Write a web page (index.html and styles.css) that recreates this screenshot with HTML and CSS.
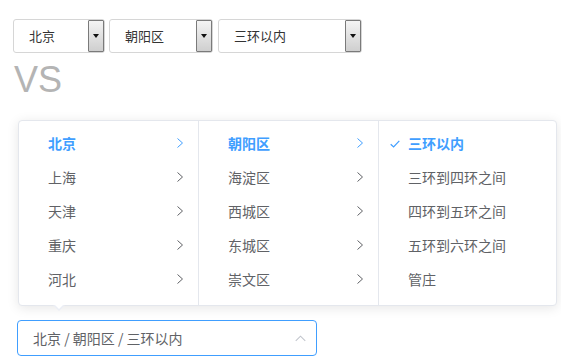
FILE: index.html
```html
<!DOCTYPE html>
<html lang="zh">
<head>
<meta charset="utf-8">
<title>Cascader</title>
<link rel="stylesheet" href="styles.css">
</head>
<body>
<div class="page">
  <div class="selects">
    <div class="sel w1"><span class="sel-text">北京</span><span class="sel-btn"><i class="tri"></i></span></div>
    <div class="sel w2"><span class="sel-text">朝阳区</span><span class="sel-btn"><i class="tri"></i></span></div>
    <div class="sel w3"><span class="sel-text">三环以内</span><span class="sel-btn"><i class="tri"></i></span></div>
  </div>
  <div class="vs">VS</div>
  <div class="cascader">
    <div class="panel">
      <ul class="menu">
        <li class="node active"><span>北京</span><svg class="arr" viewBox="0 0 6 10"><path d="M0.5 0.5 L5.5 5 L0.5 9.5" /></svg></li>
        <li class="node"><span>上海</span><svg class="arr" viewBox="0 0 6 10"><path d="M0.5 0.5 L5.5 5 L0.5 9.5" /></svg></li>
        <li class="node"><span>天津</span><svg class="arr" viewBox="0 0 6 10"><path d="M0.5 0.5 L5.5 5 L0.5 9.5" /></svg></li>
        <li class="node"><span>重庆</span><svg class="arr" viewBox="0 0 6 10"><path d="M0.5 0.5 L5.5 5 L0.5 9.5" /></svg></li>
        <li class="node"><span>河北</span><svg class="arr" viewBox="0 0 6 10"><path d="M0.5 0.5 L5.5 5 L0.5 9.5" /></svg></li>
      </ul>
      <ul class="menu">
        <li class="node active"><span>朝阳区</span><svg class="arr" viewBox="0 0 6 10"><path d="M0.5 0.5 L5.5 5 L0.5 9.5" /></svg></li>
        <li class="node"><span>海淀区</span><svg class="arr" viewBox="0 0 6 10"><path d="M0.5 0.5 L5.5 5 L0.5 9.5" /></svg></li>
        <li class="node"><span>西城区</span><svg class="arr" viewBox="0 0 6 10"><path d="M0.5 0.5 L5.5 5 L0.5 9.5" /></svg></li>
        <li class="node"><span>东城区</span><svg class="arr" viewBox="0 0 6 10"><path d="M0.5 0.5 L5.5 5 L0.5 9.5" /></svg></li>
        <li class="node"><span>崇文区</span><svg class="arr" viewBox="0 0 6 10"><path d="M0.5 0.5 L5.5 5 L0.5 9.5" /></svg></li>
      </ul>
      <ul class="menu last">
        <li class="node leaf active"><svg class="check" viewBox="0 0 10 8"><path d="M0.7 4.2 L3.6 7 L9.3 0.8" /></svg><span>三环以内</span></li>
        <li class="node leaf"><span>三环到四环之间</span></li>
        <li class="node leaf"><span>四环到五环之间</span></li>
        <li class="node leaf"><span>五环到六环之间</span></li>
        <li class="node leaf"><span>管庄</span></li>
      </ul>
      <i class="popper-arrow"></i>
    </div>
    <div class="input">
      <span class="input-text">北京 / 朝阳区 / 三环以内</span>
      <svg class="up" viewBox="0 0 12 7"><path d="M0.8 6.2 L6 1 L11.2 6.2" /></svg>
    </div>
  </div>
</div>
</body>
</html>
```

FILE: styles.css
```css
* { box-sizing: border-box; }
html, body { margin: 0; padding: 0; background: #fff; }
body {
  font-family: "Noto Sans CJK SC", "Liberation Sans", sans-serif;
  color: #606266;
}
.page { padding: 19px 0 0 13px; }

.selects { display: flex; gap: 4px; height: 34px; }
.sel {
  display: flex;
  align-items: stretch;
  height: 34px;
  border: 1px solid #d6d6d6;
  border-radius: 3px;
  background: #fff;
}
.w1 { width: 92px; }
.w2 { width: 104px; }
.w3 { width: 144px; margin-left: 1px; }
.sel-text {
  flex: 1;
  padding-left: 15px;
  font-size: 13px;
  line-height: 32px;
  color: #333;
}
.sel-btn {
  width: 16px;
  border: 1px solid #7a7a7a;
  border-radius: 1px;
  background: linear-gradient(#f4f4f4, #cfcfcf);
  display: flex;
  align-items: center;
  justify-content: center;
}
.tri {
  width: 0; height: 0;
  border-left: 3.5px solid transparent;
  border-right: 3.5px solid transparent;
  border-top: 4px solid #111;
}

.vs {
  margin-top: 7px;
  font-family: "Liberation Sans", Arial, sans-serif;
  font-size: 36px;
  line-height: 40px;
  color: #b4b4b4;
  padding-left: 1px;
}

.cascader {
  position: relative;
  width: 300px;
  margin: 220px 0 0 4px;
}
.input {
  height: 36px;
  border: 1px solid #409eff;
  border-radius: 4px;
  display: flex;
  align-items: center;
  padding: 0 10px 0 15px;
}
.input-text { flex: 1; font-size: 14px; color: #606266; }
.up { width: 11px; height: 7px; margin-right: 0; fill: none; stroke: #c0c4cc; stroke-width: 1.1; }

.panel {
  position: absolute;
  left: 1px;
  bottom: calc(100% + 14px);
  width: 539px;
  height: 186px;
  display: flex;
  background: #fff;
  border: 1px solid #e4e7ed;
  border-radius: 4px;
  box-shadow: 0 2px 12px 0 rgba(0, 0, 0, 0.1);
}
.menu {
  list-style: none;
  margin: 0;
  padding: 5px 0 0;
  width: 180px;
  border-right: 1px solid #e4e7ed;
}
.menu.last { flex: 1; border-right: 0; }
.node {
  position: relative;
  height: 34px;
  line-height: 34px;
  padding-left: 29px;
  font-size: 14px;
  color: #606266;
}
.node.active { color: #409eff; font-weight: 700; }
.arr {
  position: absolute;
  right: 15px;
  top: 12px;
  width: 6px;
  height: 10px;
  fill: none;
  stroke: #606266;
  stroke-width: 1;
}
.node.active .arr { stroke: #409eff; }
.check {
  position: absolute;
  left: 11px;
  top: 14px;
  width: 10px;
  height: 8px;
  fill: none;
  stroke: #409eff;
  stroke-width: 1.2;
}
.popper-arrow {
  position: absolute;
  left: 34px;
  bottom: -6px;
  width: 0; height: 0;
  border-left: 6px solid transparent;
  border-right: 6px solid transparent;
  border-top: 6px solid #ebeef5;
}
.popper-arrow::after {
  content: "";
  position: absolute;
  left: -5px;
  top: -7px;
  border-left: 5px solid transparent;
  border-right: 5px solid transparent;
  border-top: 5px solid #fff;
}
```
